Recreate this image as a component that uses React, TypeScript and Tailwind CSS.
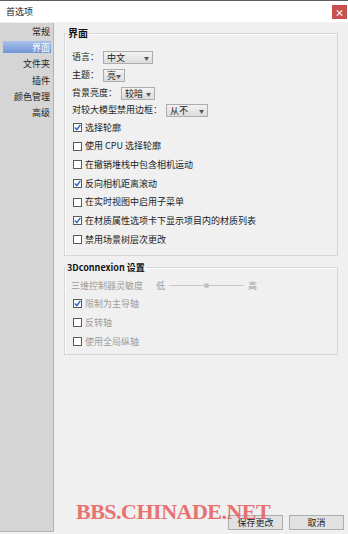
import React from 'react';

const font = { fontFamily: '"Noto Sans CJK SC", "Noto Sans", sans-serif' };

const Check = ({ checked }: { checked: boolean }) => (
  <span className="w-[9px] h-[9px] border border-[#5a5a5a] bg-white flex items-center justify-center shrink-0">
    {checked && (
      <svg width="7" height="7" viewBox="0 0 7 7">
        <path d="M0.8 3.6 L2.8 5.6 L6.3 1" stroke="#2f63c0" strokeWidth="1.4" fill="none" />
      </svg>
    )}
  </span>
);

const Combo = ({ value, w }: { value: string; w: string }) => (
  <span
    className={`${w} h-[13px] border border-[#adadad] bg-gradient-to-b from-[#f2f2f2] to-[#dcdcdc] flex items-center justify-between pl-[3px] pr-[3px] text-[9px] leading-none text-[#222] whitespace-nowrap`}
  >
    <span className="whitespace-nowrap">{value}</span>
    <span className="text-[5px] text-[#555] shrink-0">▼</span>
  </span>
);

const CheckRow = ({ label, checked, dim }: { label: string; checked: boolean; dim?: boolean }) => (
  <div className={`flex items-center gap-[3px] pl-[1px] ${dim ? 'text-[#9c9c9c]' : 'text-[#222]'}`}>
    <Check checked={checked} />
    <span>{label}</span>
  </div>
);

const sideItems = ['常规', '界面', '文件夹', '插件', '颜色管理', '高级'];

const checks = [
  { label: '选择轮廓', checked: true },
  { label: '使用 CPU 选择轮廓', checked: false },
  { label: '在撤销堆栈中包含相机运动', checked: false },
  { label: '反向相机距离滚动', checked: true },
  { label: '在实时视图中启用子菜单', checked: false },
  { label: '在材质属性选项卡下显示项目内的材质列表', checked: true },
  { label: '禁用场景树层次更改', checked: false },
];

export default function App() {
  return (
    <div className="w-[348px] h-[534px] flex flex-col bg-[#f0f0f0] border-t border-[#5e5e5e] overflow-hidden relative text-[9px]" style={font}>
      {/* title bar */}
      <div className="h-[21px] bg-white flex items-center justify-between pl-[6px] pr-[1px]">
        <span className="text-[9px] text-[#222]">首选项</span>
        <span className="w-[15px] h-[14px] bg-[#c9504d] flex items-center justify-center text-white text-[9px] font-bold leading-none mt-[1px]">
          ×
        </span>
      </div>

      <div className="flex-1 flex mt-[1px]">
        {/* sidebar */}
        <div className="w-[54px] bg-[#d5d5d5] border-r border-b border-[#b4b4b4] mb-[2px] flex flex-col gap-[4.4px] pt-[2px]">
          {sideItems.map((s) => (
            <div
              key={s}
              className={`h-[12px] ml-[3px] mr-[2px] flex items-center justify-end pr-[1px] leading-none ${
                s === '界面' ? 'bg-gradient-to-b from-[#a9c1ec] to-[#7095d6] text-white' : 'text-[#222]'
              }`}
            >
              {s}
            </div>
          ))}
        </div>

        {/* main */}
        <div className="flex-1 flex flex-col pt-[4px] pl-[10px] pr-[10px]">
          <fieldset className="border border-[#d6d6d6] shadow-[inset_1px_1px_0_#fff]">
            <legend className="ml-[2px] px-[1px] text-[10px] font-bold leading-[12px] text-[#111]">界面</legend>
            <div className="flex flex-col pl-[7px] pt-[9px] pb-[6px] text-[#222]">
              <div className="h-[18px] flex items-center gap-[4px]">
                <span>语言：</span>
                <Combo value="中文" w="w-[50px]" />
              </div>
              <div className="h-[18px] flex items-center gap-[4px]">
                <span>主题：</span>
                <Combo value="亮" w="w-[22px]" />
              </div>
              <div className="h-[18px] flex items-center gap-[4px]">
                <span>背景亮度：</span>
                <Combo value="较暗" w="w-[34px]" />
              </div>
              <div className="h-[16px] flex items-center gap-[4px]">
                <span>对较大模型禁用边框：</span>
                <Combo value="从不" w="w-[42px]" />
              </div>
              {checks.map((c) => (
                <div key={c.label} className="h-[18.7px] flex items-center">
                  <CheckRow label={c.label} checked={c.checked} />
                </div>
              ))}
            </div>
          </fieldset>

          <fieldset className="mt-[6px] border border-[#d6d6d6] shadow-[inset_1px_1px_0_#fff]">
            <legend className="ml-[1px] px-[1px] text-[9px] font-bold leading-[12px] text-[#111]">3Dconnexion 设置</legend>
            <div className="flex flex-col pl-[6px] pt-[3px] pb-[3px] text-[#9c9c9c]">
              <div className="h-[17px] flex items-center">
                <span>三维控制器灵敏度</span>
                <span className="ml-[13px]">低</span>
                <span className="relative w-[75px] h-[5px] mx-[4px] flex items-center">
                  <span className="w-full h-px bg-[#c8c8c8]" />
                  <span className="absolute left-[35px] w-[5px] h-[5px] rounded-full bg-[#c2c2c2]" />
                </span>
                <span>高</span>
              </div>
              <div className="h-[19px] flex items-center pl-[1px]">
                <CheckRow label="限制为主导轴" checked dim />
              </div>
              <div className="h-[19px] flex items-center pl-[1px]">
                <CheckRow label="反转轴" checked={false} dim />
              </div>
              <div className="h-[19px] flex items-center pl-[1px]">
                <CheckRow label="使用全局纵轴" checked={false} dim />
              </div>
            </div>
          </fieldset>

          <div className="flex-1" />

          <div className="flex justify-end gap-[6px] -mr-[6px] pb-[4px]">
            <button className="w-[55px] h-[15px] border border-[#adadad] bg-[#e1e1e1] text-[9px] leading-none text-[#222]">保存更改</button>
            <button className="w-[55px] h-[15px] border border-[#adadad] bg-[#e1e1e1] text-[9px] leading-none text-[#222]">取消</button>
          </div>
        </div>
      </div>

      {/* watermark */}
      <div
        className="absolute left-[76px] top-[500px] text-[22px] font-bold text-[#e86464] opacity-90 leading-none tracking-[-0.5px]"
        style={{ fontFamily: '"Liberation Serif", serif' }}
      >
        BBS.CHINADE.NET
      </div>
    </div>
  );
}
